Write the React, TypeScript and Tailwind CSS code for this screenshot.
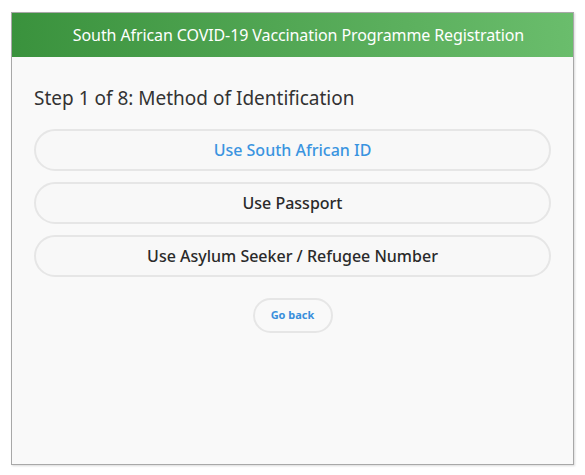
import React from "react";

const font = { fontFamily: '"Noto Sans", "Open Sans", sans-serif' };

function Choice({ label, active }: { label: string; active?: boolean }) {
  return (
    <button
      className={
        "h-[42px] w-full rounded-full border-2 border-[#e6e6e6] bg-[#f8f8f8] text-[16px] font-medium " +
        (active ? "text-[#3a94e0]" : "text-[#2a2a2a]")
      }
      style={font}
    >
      {label}
    </button>
  );
}

export default function App() {
  return (
    <div className="h-[475px] w-[585px] bg-white pt-[12px] pl-[11px]" style={font}>
      <div className="flex h-[453px] w-[563px] flex-col border border-[#a8a8a8] bg-[#f9f9f9] shadow-[1px_1px_2px_rgba(0,0,0,0.15)]">
        <div className="flex h-[44px] items-center justify-center bg-gradient-to-r from-[#3a923d] to-[#6abd6c] pl-[12px] text-[16px] tracking-[-0.1px] text-white">
          South African COVID-19 Vaccination Programme Registration
        </div>
        <div className="flex flex-col px-[22px] pt-[29px]">
          <div className="text-[19px] leading-[24px] text-[#333]">
            Step 1 of 8: Method of Identification
          </div>
          <div className="mt-[19px] flex flex-col gap-[11px]">
            <Choice label="Use South African ID" active />
            <Choice label="Use Passport" />
            <Choice label="Use Asylum Seeker / Refugee Number" />
          </div>
          <div className="mt-[21px] flex justify-center">
            <button className="h-[35px] w-[80px] rounded-full border-2 border-[#e6e6e6] bg-[#f9f9f9] text-[11px] font-bold text-[#3a8fdc]">
              Go back
            </button>
          </div>
        </div>
      </div>
    </div>
  );
}
